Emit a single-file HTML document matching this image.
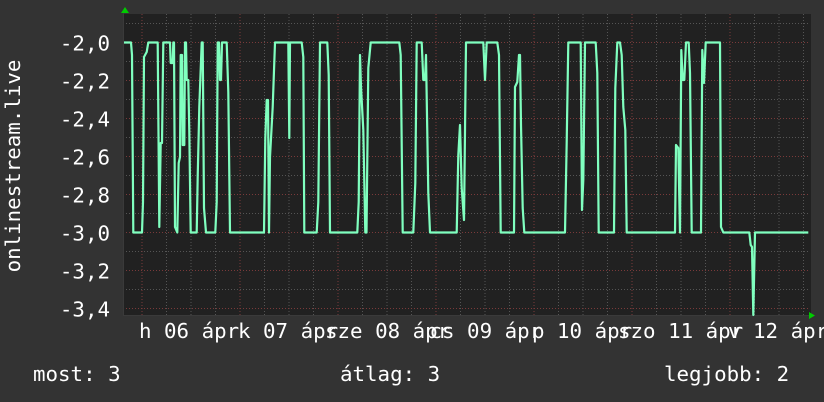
<!DOCTYPE html>
<html><head><meta charset="utf-8"><style>
html,body{margin:0;padding:0;background:#333;}
svg{display:block}
text{font-family:"DejaVu Sans Mono","Liberation Mono",monospace;fill:#fff;font-size:20.8px}
</style></head><body>
<svg width="824" height="402" viewBox="0 0 824 402" xmlns="http://www.w3.org/2000/svg">
<rect width="824" height="402" fill="#333"/>
<rect x="123" y="14" width="688" height="302" fill="#212121"/>
<g stroke-width="1" stroke-dasharray="1,2">
<g stroke="#555">
<line x1="123" x2="810" y1="23.5" y2="23.5"/><line x1="123" x2="810" y1="61.5" y2="61.5"/><line x1="123" x2="810" y1="99.5" y2="99.5"/><line x1="123" x2="810" y1="137.5" y2="137.5"/><line x1="123" x2="810" y1="175.5" y2="175.5"/><line x1="123" x2="810" y1="213.5" y2="213.5"/><line x1="123" x2="810" y1="251.5" y2="251.5"/><line x1="123" x2="810" y1="289.5" y2="289.5"/>
<line y1="14" y2="316" x1="166.5" x2="166.5"/><line y1="14" y2="316" x1="191" x2="191"/><line y1="14" y2="316" x1="215.5" x2="215.5"/>
<line y1="14" y2="316" x1="264.5" x2="264.5"/><line y1="14" y2="316" x1="289" x2="289"/><line y1="14" y2="316" x1="313.5" x2="313.5"/>
<line y1="14" y2="316" x1="362.5" x2="362.5"/><line y1="14" y2="316" x1="387" x2="387"/><line y1="14" y2="316" x1="411.5" x2="411.5"/>
<line y1="14" y2="316" x1="460.5" x2="460.5"/><line y1="14" y2="316" x1="485" x2="485"/><line y1="14" y2="316" x1="509.5" x2="509.5"/>
<line y1="14" y2="316" x1="558.5" x2="558.5"/><line y1="14" y2="316" x1="583" x2="583"/><line y1="14" y2="316" x1="607.5" x2="607.5"/>
<line y1="14" y2="316" x1="656.5" x2="656.5"/><line y1="14" y2="316" x1="681" x2="681"/><line y1="14" y2="316" x1="705.5" x2="705.5"/>
<line y1="14" y2="316" x1="754.5" x2="754.5"/><line y1="14" y2="316" x1="779" x2="779"/><line y1="14" y2="316" x1="803.5" x2="803.5"/>
</g>
<g stroke="#7a3a3a">
<line x1="123" x2="810" y1="42.5" y2="42.5"/><line x1="123" x2="810" y1="80.5" y2="80.5"/><line x1="123" x2="810" y1="118.5" y2="118.5"/><line x1="123" x2="810" y1="156.5" y2="156.5"/><line x1="123" x2="810" y1="194.5" y2="194.5"/><line x1="123" x2="810" y1="232.5" y2="232.5"/><line x1="123" x2="810" y1="270.5" y2="270.5"/><line x1="123" x2="810" y1="308.5" y2="308.5"/>
<line y1="14" y2="316" x1="142" x2="142"/><line y1="14" y2="316" x1="240" x2="240"/><line y1="14" y2="316" x1="338" x2="338"/><line y1="14" y2="316" x1="436" x2="436"/><line y1="14" y2="316" x1="534" x2="534"/><line y1="14" y2="316" x1="632" x2="632"/><line y1="14" y2="316" x1="730" x2="730"/>
</g>
</g>
<line x1="123" x2="812" y1="315.5" y2="315.5" stroke="#3a3a3a"/>
<line x1="123.5" x2="123.5" y1="12" y2="316" stroke="#3a3a3a"/>
<polygon points="121,13 125,7 129,13" fill="#00cc00"/>
<polygon points="809,312 815,315.5 809,319" fill="#00cc00"/>
<polyline fill="none" stroke="#80ffbf" stroke-width="2.2" stroke-linejoin="round" points="
124,42.5 131,42.5 132,55 133.3,232.5 142,232.5 143,202 144,57 146.7,52 148.3,42.5 157.7,42.5 159.3,227 160.7,143 162,143 163.3,42.5 170,42.5 170.7,63 172.7,63 173.3,42.5 174,42.5 175,227 177.3,232.5 178.7,163 180,157 180.7,55 182,55 182.7,145 184.3,145 185,42.5 186,42.5 186.7,80 188.3,80 189.3,132 190.7,232.5 196.7,232.5 197.7,177 199.3,107 201.7,42.5 202.7,42.5 204,208 206,232.5 215.3,232.5 216.7,202 217.7,42.5 219,42.5 220,80 221,80 222,42.5 226.7,42.5 228.3,92 230,232.5 264,232.5 265.3,138 266.7,100 268,100 269,232.5 270,157 272.7,107 275,42.5 278.3,42.5 285,42.5 288.3,42.5 289.3,138 290,42.5 301.7,42.5 303.3,57 304.3,232.5 316.7,232.5 318.3,202 320,42.5 327.3,42.5 328.7,75 330,232.5 357.3,232.5 358.7,202 360,55 361,87 363.3,130 365.3,232.5 366.5,232.5 368.3,68 370.7,42.5 399.3,42.5 400.7,55 402.7,232.5 413.3,232.5 415.3,183 416.7,42.5 421.7,42.5 423.3,80 425,80 426,55 428.3,193 430,232.5 456.7,232.5 458.3,155 460,125 461.7,188 464,220 466,42.5 483.3,42.5 485,80 486.7,42.5 497.3,42.5 499,55 500.7,232.5 514,232.5 515,87 517.3,82 519,55 520,55 521,125 522.7,208 524.3,232.5 565,232.5 566.7,142 568.3,42.5 580.7,42.5 582,210 583.3,180 585,42.5 595.7,42.5 597.3,73 598.7,232.5 614,232.5 615.3,88 617.3,42.5 620,42.5 621.7,55 623.3,107 625.3,130 626.7,232.5 675,232.5 676,145 678.3,148 680,232.5 681.3,50 682.7,80 684.3,80 686,42.5 688.7,42.5 690,73 691.7,232.5 701,232.5 702.3,50 704,83 705.7,42.5 720,42.5 721,227 723.3,232.5 749.3,232.5 750.7,245 752,247 753.3,315 755,232.5 808.3,232.5"/>
<g text-anchor="end">
<text x="110" y="50.5">-2,0</text>
<text x="110" y="88.5">-2,2</text>
<text x="110" y="126.5">-2,4</text>
<text x="110" y="164.5">-2,6</text>
<text x="110" y="202.5">-2,8</text>
<text x="110" y="240.5">-3,0</text>
<text x="110" y="278.5">-3,2</text>
<text x="110" y="316.5">-3,4</text>
</g>
<text transform="translate(20,166) rotate(-90)" text-anchor="middle">onlinestream.live</text>
<g>
<text x="139" y="338">h 06 ápr</text>
<text x="238" y="338">k 07 ápr</text>
<text x="325" y="338">sze 08 ápr</text>
<text x="429.5" y="338">cs 09 ápr</text>
<text x="532" y="338">p 10 ápr</text>
<text x="618" y="338">szo 11 ápr</text>
<text x="728" y="338">v 12 ápr</text>
</g>
<text x="33" y="381">most: 3</text>
<text x="340" y="381">átlag: 3</text>
<text x="664" y="381">legjobb: 2</text>
</svg>
</body></html>
